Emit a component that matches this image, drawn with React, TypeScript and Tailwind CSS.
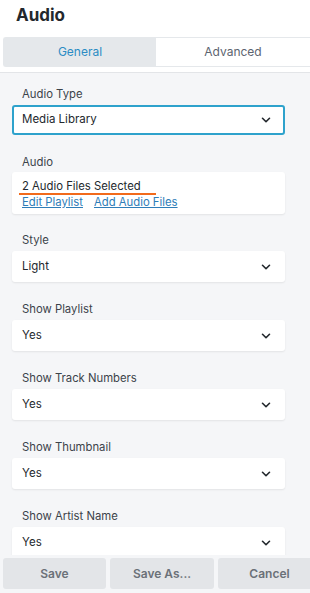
import { ChevronDown } from 'lucide-react'

const selects = [
  { label: 'Style', value: 'Light' },
  { label: 'Show Playlist', value: 'Yes' },
  { label: 'Show Track Numbers', value: 'Yes' },
  { label: 'Show Thumbnail', value: 'Yes' },
  { label: 'Show Artist Name', value: 'Yes' },
]

function Select({ value, focused }: { value: string; focused?: boolean }) {
  return (
    <div
      className={
        focused
          ? 'flex h-[30px] items-center justify-between rounded-[3px] border-2 border-[#2ea2cc] bg-white pl-[8px] pr-[10px]'
          : 'flex h-[31px] items-center justify-between rounded-[3px] bg-white pl-[10px] pr-[12px] shadow-[0_1px_2px_rgba(0,0,0,0.08)]'
      }
    >
      <span className="text-[11.5px] text-[#23282d]">{value}</span>
      <ChevronDown className="h-[14px] w-[14px] text-[#23282d]" strokeWidth={2.75} />
    </div>
  )
}

export default function App() {
  return (
    <div className="flex h-[593px] w-[310px] flex-col overflow-hidden bg-[#f5f6f8] font-['Inter',sans-serif]">
      {/* Header */}
      <div className="bg-white pb-[5px] shadow-[0_1px_0_#e3e5e8]">
        <h1 className="h-[37px] pl-[16px] pt-[3px] text-[17px] font-bold text-[#23282d]">Audio</h1>
        <div className="ml-[3px] flex h-[30px] rounded-l-[3px] border border-r-0 border-[#e5e8eb]">
          <div className="flex w-[152px] items-center justify-center bg-[#e5e8eb] text-[12px] text-[#2b8cc4]">
            General
          </div>
          <div className="flex flex-1 items-center justify-center bg-white text-[12px] text-[#5c6470]">
            Advanced
          </div>
        </div>
      </div>

      {/* Fields */}
      <div className="flex-1 overflow-hidden pl-[12px] pr-[25px] pt-[14px]">
        <div className="mb-[19px]">
          <p className="mb-[3px] pl-[10px] text-[11.3px] leading-[16px] text-[#3c434a]">Audio Type</p>
          <Select value="Media Library" focused />
        </div>

        <div className="mb-[18px]">
          <p className="mb-[2px] pl-[10px] text-[11.3px] leading-[16px] text-[#3c434a]">Audio</p>
          <div className="h-[42px] rounded-[3px] bg-white pl-[10px] pt-[8px] shadow-[0_1px_2px_rgba(0,0,0,0.08)]">
            <p className="text-[11.3px] leading-[13px] text-[#23282d]">2 Audio Files Selected</p>
            <div className="-ml-[3px] h-[2px] w-[137px] bg-[#f26a1b]" />
            <div className="flex gap-[11px] text-[11.3px] leading-[14px] text-[#2e7db8]">
              <span className="underline">Edit Playlist</span>
              <span className="underline">Add Audio Files</span>
            </div>
          </div>
        </div>

        {selects.map((s) => (
          <div key={s.label} className="mb-[19px]">
            <p className="mb-[3px] pl-[10px] text-[11.3px] leading-[16px] text-[#3c434a]">{s.label}</p>
            <Select value={s.value} />
          </div>
        ))}
      </div>

      {/* Footer */}
      <div className="flex h-[38px] shrink-0 gap-[4px] bg-[#f5f6f8] px-[3px] pt-[3px]">
        <button className="h-[31px] w-[103px] shrink-0 rounded-[3px] bg-[#e3e5e8] text-[12px] font-semibold text-[#6b7178]">
          Save
        </button>
        <button className="h-[31px] w-[104px] shrink-0 rounded-[3px] bg-[#e3e5e8] text-[12px] font-semibold text-[#6b7178]">
          Save As...
        </button>
        <button className="h-[31px] w-[103px] shrink-0 rounded-[3px] bg-[#e3e5e8] text-[12px] font-semibold text-[#6b7178]">
          Cancel
        </button>
      </div>
    </div>
  )
}
